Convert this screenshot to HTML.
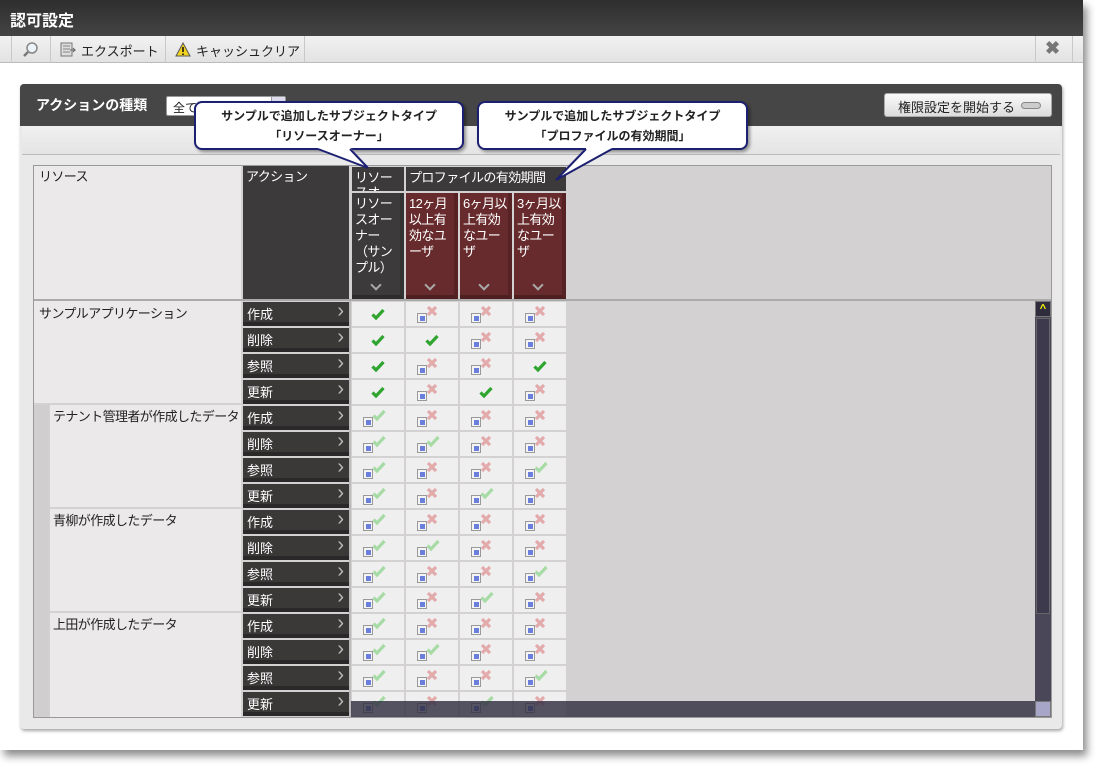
<!DOCTYPE html>
<html><head><meta charset="utf-8"><style>
*{margin:0;padding:0;box-sizing:border-box}
body{width:1099px;height:766px;position:relative;background:#fff;font-family:"Liberation Sans","Noto Sans CJK JP",sans-serif;font-size:13px;color:#222;overflow:hidden}
.a{position:absolute}
.win{left:0;top:0;width:1083px;height:750px;background:#fff;box-shadow:4px 6px 8px rgba(0,0,0,.45)}
.title{left:0;top:0;width:1083px;height:36px;background:linear-gradient(#2e2e2e,#444);color:#fff;font-weight:bold;font-size:16px;padding:7px 10px}
.tb{left:0;top:36px;width:1083px;height:27px;background:linear-gradient(#f2f2f2,#e2e2e2);border-bottom:1px solid #bbb}
.sep{top:36px;width:1px;height:27px;background:#c8c8c8}
.tbt{top:41px;font-size:13px;color:#222}
.panel{left:20px;top:84px;width:1042px;height:645px;background:#e9e9e9;border-radius:4px;box-shadow:1px 2px 3px rgba(0,0,0,.35)}
.ph{left:20px;top:84px;width:1042px;height:42px;background:#464646;border-radius:4px 4px 0 0}
.inner{left:33px;top:165px;width:1019px;height:553px;background:#d3d1d2;border:1px solid #999}
.rh{background:#ebe9ea}
.dk{background:#3c3a3a;color:#fff}
.mr{background:#672b2d;color:#fff}
.hd{font-size:13px;line-height:16px;padding:3px 2px 3px 3px;overflow:hidden;letter-spacing:-0.6px;white-space:nowrap}
.act{left:243px;width:106px;height:24px;background:#3b3838;color:#fff;border-bottom:4px solid #2a2828;padding:2px 4px;font-size:13px}
.act:after{content:"›";position:absolute;right:5px;top:-2px;font-size:20px;line-height:22px;color:#bbb}
.cell{width:52px;height:24px;background:#efefef}
.chev{bottom:6px;left:20px;width:8px;height:8px;border-right:2px solid #aaa;border-bottom:2px solid #aaa;transform:rotate(45deg)}
.callout{background:#fff;border:2px solid #1c2070;border-radius:8px;font-weight:bold;font-size:12px;text-align:center;line-height:20px;padding-top:3px;box-shadow:2px 2px 3px rgba(0,0,0,.4)}
</style></head><body>
<svg width="0" height="0" style="position:absolute"><defs>
<symbol id="c" viewBox="0 0 14 12"><path d="M1.5 6.5 L5 10 L12.5 2" fill="none" stroke="#2fa52f" stroke-width="3.2"/></symbol>
<symbol id="cf" viewBox="0 0 14 12"><path d="M1.5 6.5 L5 10 L12.5 2" fill="none" stroke="#a6dba6" stroke-width="3.2"/></symbol>
<symbol id="x" viewBox="0 0 12 12"><path d="M2 2 L10 10 M10 2 L2 10" fill="none" stroke="#e2aaaa" stroke-width="3.2"/></symbol>
<symbol id="i" viewBox="0 0 10 10"><rect x="0.5" y="0.5" width="9" height="9" fill="#f4f4f4" stroke="#999"/><rect x="3" y="3" width="5" height="5" fill="#6a7fdc"/></symbol>
</defs></svg>
<div class="a win"></div>
<div class="a title">認可設定</div>
<div class="a tb"></div>
<div class="a sep" style="left:11px"></div><div class="a sep" style="left:50px"></div><div class="a sep" style="left:165px"></div><div class="a sep" style="left:304px"></div><div class="a sep" style="left:1035px"></div><div class="a sep" style="left:1072px"></div>
<svg class="a" style="left:22px;top:41px" width="17" height="17"><circle cx="10" cy="7" r="5" fill="#eef3f8" stroke="#888" stroke-width="1.5"/><path d="M6 11 L2 15" stroke="#777" stroke-width="2.5"/></svg>
<svg class="a" style="left:60px;top:42px" width="16" height="16"><rect x="1" y="1" width="11" height="13" fill="#ddd" stroke="#777"/><path d="M3 4h7M3 7h7M3 10h7" stroke="#888"/><path d="M10 8h5l-2-2M15 8l-2 2" stroke="#666" fill="none"/></svg>
<div class="a tbt" style="left:81px">エクスポート</div>
<svg class="a" style="left:175px;top:42px" width="16" height="15"><path d="M8 1 L15 14 H1 Z" fill="#f3d320" stroke="#555"/><path d="M8 5v5M8 11.5v1.5" stroke="#111" stroke-width="1.6"/></svg>
<div class="a tbt" style="left:196px">キャッシュクリア</div>
<div class="a" style="left:1045px;top:38px;font-size:18px;font-weight:bold;color:#777">✖</div>

<div class="a panel"></div>
<div class="a ph"></div>
<div class="a" style="left:22px;top:126px;width:1038px;height:29px;background:linear-gradient(#f0f0f0,#e4e4e4);border-bottom:1px solid #bbb"></div>
<div class="a" style="left:36px;top:95px;color:#fff;font-weight:bold;font-size:14px">アクションの種類</div>
<div class="a" style="left:166px;top:96px;width:120px;height:20px;background:#fff;border:1px solid #999;border-radius:2px;padding:2px 6px;font-size:12px">全て<div class="a" style="right:0;top:0;width:14px;height:18px;background:#dde;border-left:1px solid #99a"></div></div>
<div class="a" style="left:884px;top:93px;width:168px;height:24px;background:linear-gradient(#fafafa,#dcdcdc);border:1px solid #aaa;border-radius:3px;padding:3px 13px;font-size:13px">権限設定を開始する<div class="a" style="right:10px;top:8px;width:20px;height:7px;border-radius:4px;background:#ccc;border:1px solid #888"></div></div>

<div class="a inner"></div>
<div class="a rh hd" style="left:34px;top:166px;width:207px;height:133px;padding-left:5px">リソース</div>
<div class="a dk hd" style="left:243px;top:166px;width:106px;height:133px">アクション</div>
<div class="a dk hd" style="left:352px;top:167px;width:52px;height:24px;line-height:15px">リソー<br>スオ</div>
<div class="a dk hd" style="left:406px;top:167px;width:160px;height:24px">プロファイルの有効期間</div>
<div class="a dk hd" style="left:352px;top:193px;width:52px;height:106px;border-right:4px solid #333;border-bottom:4px solid #2d2b2b">リソー<br>スオー<br>ナー<br>（サン<br>プル）<div class="a chev"></div></div>
<div class="a mr hd" style="left:406px;top:193px;width:52px;height:106px;border-right:4px solid #572224;border-bottom:4px solid #4e1f21">12ヶ月<br>以上有<br>効なユ<br>ーザ<div class="a chev"></div></div>
<div class="a mr hd" style="left:460px;top:193px;width:52px;height:106px;border-right:4px solid #572224;border-bottom:4px solid #4e1f21">6ヶ月以<br>上有効<br>なユー<br>ザ<div class="a chev"></div></div>
<div class="a mr hd" style="left:514px;top:193px;width:52px;height:106px;border-right:4px solid #572224;border-bottom:4px solid #4e1f21">3ヶ月以<br>上有効<br>なユー<br>ザ<div class="a chev"></div></div>
<div class="a" style="left:34px;top:299px;width:1017px;height:2px;background:#aaa"></div>

<div class="a rh hd" style="left:34px;top:301px;width:207px;height:102px;padding-top:5px;padding-left:5px">サンプルアプリケーション</div>
<div class="a" style="left:34px;top:405px;width:15px;height:312px;background:#d0cecf"></div>
<div class="a rh hd" style="left:50px;top:405px;width:191px;height:102px;padding-top:4px">テナント管理者が作成したデータ</div>
<div class="a rh hd" style="left:50px;top:509px;width:191px;height:102px;padding-top:4px">青柳が作成したデータ</div>
<div class="a rh hd" style="left:50px;top:613px;width:191px;height:104px;padding-top:4px">上田が作成したデータ</div>

<div class="a act" style="top:302px">作成</div><div class="a act" style="top:328px">削除</div><div class="a act" style="top:354px">参照</div><div class="a act" style="top:380px">更新</div>
<div class="a act" style="top:406px">作成</div><div class="a act" style="top:432px">削除</div><div class="a act" style="top:458px">参照</div><div class="a act" style="top:484px">更新</div>
<div class="a act" style="top:510px">作成</div><div class="a act" style="top:536px">削除</div><div class="a act" style="top:562px">参照</div><div class="a act" style="top:588px">更新</div>
<div class="a act" style="top:614px">作成</div><div class="a act" style="top:640px">削除</div><div class="a act" style="top:666px">参照</div><div class="a act" style="top:692px">更新</div>
<div class="a" style="left:349px;top:301px;width:2px;height:416px;background:#bbb"></div>

<div id="grid"></div>
<script>
var P=[["c","xi","xi","xi"],["c","c","xi","xi"],["c","xi","xi","c"],["c","xi","c","xi"]];
var F=[["ci","xi","xi","xi"],["ci","ci","xi","xi"],["ci","xi","xi","ci"],["ci","xi","ci","xi"]];
var xs=[352,406,460,514],h="";
for(var r=0;r<16;r++){var row=r<4?P[r]:F[r%4];var y=302+26*r;
for(var k=0;k<4;k++){var x=xs[k],t=row[k];
h+='<div class="a cell" style="left:'+x+'px;top:'+y+'px"></div>';
if(t=="c")h+='<svg class="a" style="left:'+(x+19)+'px;top:'+(y+6)+'px" width="14" height="12"><use href="#c"/></svg>';
else{h+='<svg class="a" style="left:'+(x+11)+'px;top:'+(y+11)+'px" width="10" height="10"><use href="#i"/></svg>';
h+=t=="ci"?'<svg class="a" style="left:'+(x+20)+'px;top:'+(y+3)+'px" width="14" height="12"><use href="#cf"/></svg>':'<svg class="a" style="left:'+(x+20)+'px;top:'+(y+3)+'px" width="12" height="12"><use href="#x"/></svg>';}
}}
document.getElementById("grid").innerHTML=h;
</script>
<div class="a" style="left:351px;top:701px;width:684px;height:16px;background:rgba(50,46,66,.82)"></div>
<div class="a" style="left:1035px;top:301px;width:16px;height:416px;background:#4a4858"></div>
<div class="a" style="left:1035px;top:301px;width:16px;height:16px;background:#2f2d3d;border:1px solid #777;color:#ff0;font-size:11px;text-align:center;line-height:14px;font-weight:bold">^</div>
<div class="a" style="left:1036px;top:318px;width:14px;height:296px;background:#3c3a4c;border:1px solid #666"></div>
<div class="a" style="left:1035px;top:701px;width:16px;height:16px;background:#a8a6c8;border:1px solid #777"></div>

<div class="a callout" style="left:194px;top:101px;width:270px;height:49px">サンプルで追加したサブジェクトタイプ<br>「リソースオーナー」</div>
<div class="a callout" style="left:477px;top:101px;width:271px;height:49px">サンプルで追加したサブジェクトタイプ<br>「プロファイルの有効期間」</div>
<svg class="a" style="left:0;top:0" width="1099" height="200">
<path d="M318 147 L318 149 L368 168 L350 147 Z" fill="#fff"/>
<path d="M318 149 L368 168 L350 149" stroke="#1c2070" stroke-width="2" fill="none"/>
<path d="M586 147 L586 149 L556 180 L612 149 L612 147 Z" fill="#fff"/>
<path d="M586 149 L556 180 L612 149" stroke="#1c2070" stroke-width="2" fill="none"/>
</svg>
</body></html>
